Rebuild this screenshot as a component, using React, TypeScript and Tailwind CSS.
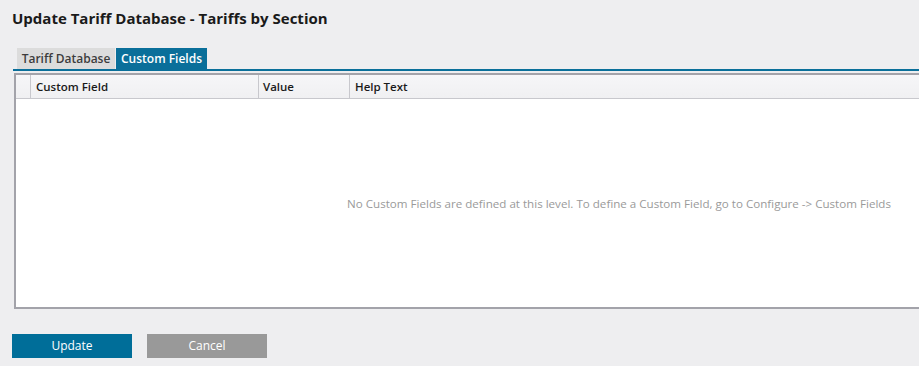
export default function App() {
    return (
        <div className="w-[919px] h-[366px] overflow-hidden bg-[#eeeef0] font-['Open_Sans',sans-serif] text-[#1a1a1a]">
            <div className="pl-3 pt-[8px] h-[48px] text-[15px] font-bold leading-[20px]">Update Tariff Database - Tariffs by Section</div>

            <div className="pl-[13px]">
                <div className="flex pl-[4px] h-[21px] items-stretch">
                    <div className="w-[98px] bg-[#dcdcdc] text-[#3c3c3c] text-[12px] font-semibold flex items-center justify-center">Tariff Database</div>
                    <div className="w-[91px] ml-[1px] bg-[#0a6f9a] text-white text-[12px] font-semibold flex items-center justify-center">Custom Fields</div>
                </div>
                <div className="h-[2px] bg-[#0a6f9a] w-[1300px]"></div>

                <div className="mt-[2px] ml-[1px] w-[1210px] h-[236px] bg-white border-2 border-[#a3a3aa] flex flex-col">
                    <div className="flex h-[24px] bg-gradient-to-b from-[#f6f6f8] to-[#f0f0f2] border-b border-[#c8c8cd] text-[11.5px] font-semibold">
                        <div className="w-[15px] border-r border-[#c8c8cd]"></div>
                        <div className="w-[228px] pl-[5px] border-r border-[#c8c8cd] flex items-center">Custom Field</div>
                        <div className="w-[91px] pl-[4px] border-r border-[#c8c8cd] flex items-center">Value</div>
                        <div className="flex-1 pl-[5px] flex items-center">Help Text</div>
                    </div>
                    <div className="flex-1 flex items-center justify-center pt-[1px] text-[11.6px] text-[#9a9a9a]">
                        No Custom Fields are defined at this level. To define a Custom Field, go to Configure -&gt; Custom Fields
                    </div>
                </div>
            </div>

            <div className="flex gap-[15px] pl-3 pt-[25px]">
                <button className="w-[120px] h-[24px] bg-[#006e99] text-white text-[12px]">Update</button>
                <button className="w-[120px] h-[24px] bg-[#999999] text-white text-[12px]">Cancel</button>
            </div>
        </div>
    )
}
